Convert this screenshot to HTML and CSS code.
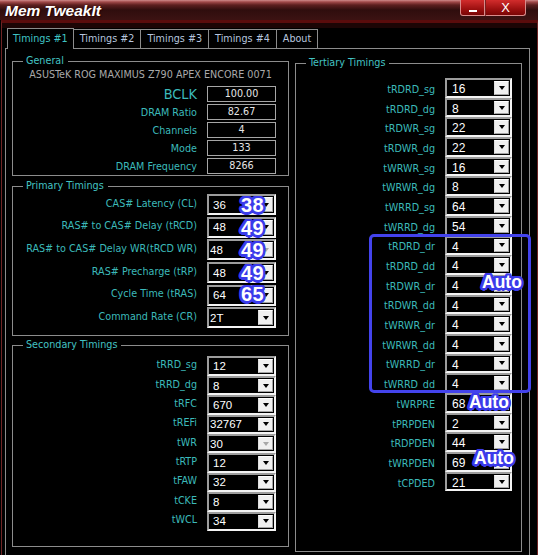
FILE: index.html
```html
<!DOCTYPE html>
<html>
<head>
<meta charset="utf-8">
<link rel="stylesheet" href="styles.css">
</head>
<body>
<div class="window">
  <div class="titlebar">
    <span class="title">Mem TweakIt</span>
    <div class="winbtns">
      <span class="wbtn min"><span class="minbar"></span></span>
      <span class="wbtn close">X</span>
    </div>
  </div>
  <div class="frame">
    <div class="tabs">
      <span class="tab active">Timings #1</span>
      <span class="tab">Timings #2</span>
      <span class="tab">Timings #3</span>
      <span class="tab">Timings #4</span>
      <span class="tab">About</span>
    </div>
    <div class="panel">
      <div class="col">
        <fieldset class="group general">
          <legend>General</legend>
          <div class="board">ASUSTeK ROG MAXIMUS Z790 APEX ENCORE 0071</div>
          <div class="info">
            <span class="lbl big">BCLK</span><span class="field">100.00</span>
            <span class="lbl">DRAM Ratio</span><span class="field">82.67</span>
            <span class="lbl">Channels</span><span class="field">4</span>
            <span class="lbl">Mode</span><span class="field">133</span>
            <span class="lbl">DRAM Frequency</span><span class="field">8266</span>
          </div>
        </fieldset>

        <fieldset class="group primary">
          <legend>Primary Timings</legend>
          <div class="rows">
            <span class="lbl">CAS# Latency (CL)</span>
            <span class="combo"><span class="v">36</span><span class="btn"></span><span class="badge num">38</span></span>
            <span class="lbl">RAS# to CAS# Delay (tRCD)</span>
            <span class="combo"><span class="v">48</span><span class="btn"></span><span class="badge num">49</span></span>
            <span class="lbl">RAS# to CAS# Delay WR(tRCD WR)</span>
            <span class="combo flat"><span class="v">48</span><span class="btn off"></span><span class="badge num">49</span></span>
            <span class="lbl">RAS# Precharge (tRP)</span>
            <span class="combo"><span class="v">48</span><span class="btn"></span><span class="badge num">49</span></span>
            <span class="lbl">Cycle Time (tRAS)</span>
            <span class="combo"><span class="v">64</span><span class="btn"></span><span class="badge num up">65</span></span>
            <span class="lbl">Command Rate (CR)</span>
            <span class="combo flat"><span class="v">2T</span><span class="btn"></span></span>
          </div>
        </fieldset>

        <fieldset class="group secondary">
          <legend>Secondary Timings</legend>
          <div class="rows">
            <span class="lbl">tRRD_sg</span><span class="combo"><span class="v">12</span><span class="btn"></span></span>
            <span class="lbl">tRRD_dg</span><span class="combo"><span class="v">8</span><span class="btn"></span></span>
            <span class="lbl">tRFC</span><span class="combo"><span class="v">670</span><span class="btn"></span></span>
            <span class="lbl">tREFi</span><span class="combo"><span class="v tight">32767</span><span class="btn"></span></span>
            <span class="lbl">tWR</span><span class="combo flat"><span class="v">30</span><span class="btn off"></span></span>
            <span class="lbl">tRTP</span><span class="combo"><span class="v">12</span><span class="btn"></span></span>
            <span class="lbl">tFAW</span><span class="combo"><span class="v">32</span><span class="btn"></span></span>
            <span class="lbl">tCKE</span><span class="combo"><span class="v">8</span><span class="btn"></span></span>
            <span class="lbl">tWCL</span><span class="combo"><span class="v">34</span><span class="btn"></span></span>
          </div>
        </fieldset>
      </div>

      <fieldset class="group tertiary">
        <legend>Tertiary Timings</legend>
        <div class="rows">
          <span class="lbl">tRDRD_sg</span><span class="combo"><span class="v">16</span><span class="btn"></span></span>
          <span class="lbl">tRDRD_dg</span><span class="combo"><span class="v">8</span><span class="btn"></span></span>
          <span class="lbl">tRDWR_sg</span><span class="combo"><span class="v">22</span><span class="btn"></span></span>
          <span class="lbl">tRDWR_dg</span><span class="combo"><span class="v">22</span><span class="btn"></span></span>
          <span class="lbl">tWRWR_sg</span><span class="combo"><span class="v">16</span><span class="btn"></span></span>
          <span class="lbl">tWRWR_dg</span><span class="combo"><span class="v">8</span><span class="btn"></span></span>
          <span class="lbl">tWRRD_sg</span><span class="combo"><span class="v">64</span><span class="btn"></span></span>
          <span class="lbl">tWRRD_dg</span><span class="combo"><span class="v">54</span><span class="btn"></span></span>
          <span class="lbl">tRDRD_dr</span><span class="combo"><span class="v">4</span><span class="btn"></span></span>
          <span class="lbl">tRDRD_dd</span><span class="combo"><span class="v">4</span><span class="btn"></span></span>
          <span class="lbl">tRDWR_dr</span><span class="combo"><span class="v">4</span><span class="btn"></span></span>
          <span class="lbl">tRDWR_dd</span><span class="combo"><span class="v">4</span><span class="btn"></span></span>
          <span class="lbl">tWRWR_dr</span><span class="combo"><span class="v">4</span><span class="btn"></span></span>
          <span class="lbl">tWRWR_dd</span><span class="combo"><span class="v">4</span><span class="btn"></span></span>
          <span class="lbl">tWRRD_dr</span><span class="combo"><span class="v">4</span><span class="btn"></span></span>
          <span class="lbl">tWRRD_dd</span><span class="combo"><span class="v">4</span><span class="btn"></span></span>
          <span class="lbl">tWRPRE</span><span class="combo"><span class="v">68</span><span class="btn"></span></span>
          <span class="lbl">tPRPDEN</span><span class="combo"><span class="v">2</span><span class="btn"></span></span>
          <span class="lbl">tRDPDEN</span><span class="combo"><span class="v">44</span><span class="btn"></span></span>
          <span class="lbl">tWRPDEN</span><span class="combo"><span class="v">69</span><span class="btn"></span></span>
          <span class="lbl">tCPDED</span><span class="combo"><span class="v">21</span><span class="btn"></span></span>
        </div>
      </fieldset>
    </div>
  </div>

  <div class="annot-box"></div>
  <span class="badge auto auto1">Auto</span>
  <span class="badge auto auto2">Auto</span>
  <span class="badge auto auto3">Auto</span>
</div>
</body>
</html>
```

FILE: styles.css
```css
* { box-sizing: border-box; }
html, body { margin: 0; padding: 0; background: #000; }
body {
  width: 538px;
  height: 555px;
  overflow: hidden;
  font-family: "DejaVu Sans Condensed", "DejaVu Sans", sans-serif;
  font-stretch: condensed;
  font-size: 10.7px;
}
.window {
  position: relative;
  width: 538px;
  height: 555px;
  background: #000;
  overflow: hidden;
}

/* title bar */
.titlebar {
  height: 20px;
  display: flex;
  justify-content: space-between;
  align-items: flex-start;
  padding-left: 5px;
  background: linear-gradient(to bottom, #cf8b8b 0, #a04848 2px, #5c1f1f 5px, #2f0d0d 10px, #3c1212 20px);
}
.title {
  font: italic bold 15.5px/20px "Liberation Sans", Arial, sans-serif;
  color: #fff;
  text-shadow: 1px 1px 1px #2a0000;
  margin-top: 1px;
}
.winbtns { display: flex; margin-right: 12px; }
.wbtn {
  height: 16px;
  border: 1px solid #d98b8b;
  border-top: none;
  background: linear-gradient(to bottom, #d22c2c, #9c1010 60%, #7a0505);
  display: flex;
  align-items: center;
  justify-content: center;
  color: #fff;
}
.wbtn.min { width: 25px; border-radius: 0 0 0 3px; align-items: flex-end; padding-bottom: 3px; }
.minbar { width: 8px; height: 2px; background: #fff; }
.wbtn.close {
  width: 41px;
  border-left: 1px solid #7a2020;
  border-radius: 0 0 3px 0;
  font: 13px/1 "Liberation Sans", Arial, sans-serif;
}

/* frame */
.frame {
  margin-left: 1px;
  width: 537px;
  height: 535px;
  border-left: 1px solid #6e2424;
  border-right: 1px solid #6e2424;
  border-top: 3px solid #5a0c0c;
  padding: 5px 0 0 3px;
  background: linear-gradient(to bottom, #1c0505 0, #1c0505 5px, #000 5px);
}

.tabs {
  height: 20px;
  display: flex;
  align-items: flex-end;
  padding-left: 2px;
  position: relative;
  z-index: 1;
}
.tab {
  height: 19px;
  padding: 0 6px;
  border: 1px solid #8c8c8c;
  border-bottom: none;
  color: #b7c6df;
  line-height: 18px;
  background: #000;
  white-space: nowrap;
}
.tab + .tab { border-left: none; }
.tab.active {
  height: 21px;
  margin-bottom: -1px;
  color: #3fc4c4;
  padding: 0 5px;
  line-height: 20px;
}

.panel {
  width: 525px;
  height: 510px;
  border: 1px solid #8c8c8c;
  border-bottom: none;
  display: grid;
  grid-template-columns: 277px 227px;
  column-gap: 6px;
  padding: 5px 0 0 6px;
  align-items: start;
}
.col { display: flex; flex-direction: column; }

/* group boxes */
.group {
  margin: 0;
  min-width: 0;
  border: 1px solid #8c8c8c;
  padding: 0 12px 0 12px;
}
.group legend {
  color: #43c3c3;
  padding: 0 4px 0 3px;
  margin-left: -2px;
  line-height: 14px;
  font-size: 10.7px;
}
.lbl {
  color: #3cbaba;
  text-align: right;
  white-space: nowrap;
}

/* general */
.general { padding-bottom: 1px; }
.board {
  text-align: center;
  color: #a9a9a9;
  line-height: 14px;
  margin-bottom: 4px;
  white-space: nowrap;
}
.info {
  display: grid;
  grid-template-columns: 1fr 69px;
  column-gap: 10px;
  grid-auto-rows: 16px;
  row-gap: 2px;
  align-items: center;
}
.lbl.big { font-size: 14.4px; line-height: 16px; }
.field {
  height: 16px;
  border: 1px solid #a6a6a6;
  color: #e6e6e6;
  text-align: center;
  line-height: 14px;
}

/* combos */
.rows {
  display: grid;
  grid-template-columns: 1fr 69px;
  column-gap: 10px;
  align-items: center;
}
.combo {
  position: relative;
  height: 100%;
  display: flex;
  border: 2px solid;
  border-color: #9d9d9d #f4f4f4 #f4f4f4 #9d9d9d;
  background: #000;
  padding: 1px;
}
.combo .v {
  flex: 1;
  display: flex;
  align-items: center;
  padding-left: 3px;
  color: #fff;
  font: 11.5px "Liberation Sans", Arial, sans-serif;
  white-space: nowrap;
  overflow: hidden;
}
.combo .v.tight { padding-left: 0; }
.combo.flat .v { padding-left: 0; }
.combo .btn {
  width: 15px;
  background: #f0f0f0;
  border: 1px solid;
  border-color: #fff #a3a3a3 #a3a3a3 #e0e0e0;
  display: flex;
  align-items: center;
  justify-content: center;
}
.combo .btn::after {
  content: "";
  border-left: 3.5px solid transparent;
  border-right: 3.5px solid transparent;
  border-top: 4px solid #000;
}
.combo .btn.off::after { border-top-color: #a8a8a8; }

.primary { margin-top: 3px; padding-bottom: 7px; }
.primary .rows {
  margin-top: 1px;
  grid-auto-rows: 21px;
  row-gap: 1.7px;
}
.primary .lbl { margin-top: -3px; }

.secondary { margin-top: 2px; padding-bottom: 15px; }
.secondary .rows {
  margin-top: 4px;
  grid-auto-rows: 19.4px;
}
.secondary .lbl { margin-top: -3px; }

.tertiary {
  margin-top: 2px;
  height: 496px;
  padding-right: 9px;
}
.tertiary .rows {
  margin-top: 8px;
  grid-template-columns: 1fr 67px;
  grid-auto-rows: 19.69px;
}
.tertiary .lbl { margin-top: 3px; }
.tertiary .combo .v { align-items: flex-start; padding-top: 1px; padding-left: 4px; font-size: 12px; }

/* annotations */
.badge {
  position: absolute;
  color: #fff;
  font-family: "Liberation Sans", Arial, sans-serif;
  font-weight: bold;
  line-height: 1;
  white-space: nowrap;
  text-shadow:
    2.5px 0 #3b3bea, -2.5px 0 #3b3bea, 0 2.5px #3b3bea, 0 -2.5px #3b3bea,
    1.8px 1.8px #3b3bea, -1.8px 1.8px #3b3bea, 1.8px -1.8px #3b3bea, -1.8px -1.8px #3b3bea,
    2.3px 1px #3b3bea, -2.3px 1px #3b3bea, 2.3px -1px #3b3bea, -2.3px -1px #3b3bea,
    1px 2.3px #3b3bea, -1px 2.3px #3b3bea, 1px -2.3px #3b3bea, -1px -2.3px #3b3bea,
    1px 0 #3b3bea, -1px 0 #3b3bea, 0 1px #3b3bea, 0 -1px #3b3bea,
    0 0 3px #7070f5;
}
.badge.num {
  font-size: 20px;
  left: 32px;
  top: -1px;
  letter-spacing: 0.3px;
}
.badge.num.up { top: -3px; }

.annot-box {
  position: absolute;
  left: 369px;
  top: 234px;
  width: 162px;
  height: 159px;
  border: 3px solid #4343ec;
  border-radius: 5px;
}
.badge.auto { font-size: 17.5px; }
.auto1 { left: 482px; top: 274px; }
.auto2 { left: 469px; top: 394px; }
.auto3 { left: 474px; top: 450px; }
```
